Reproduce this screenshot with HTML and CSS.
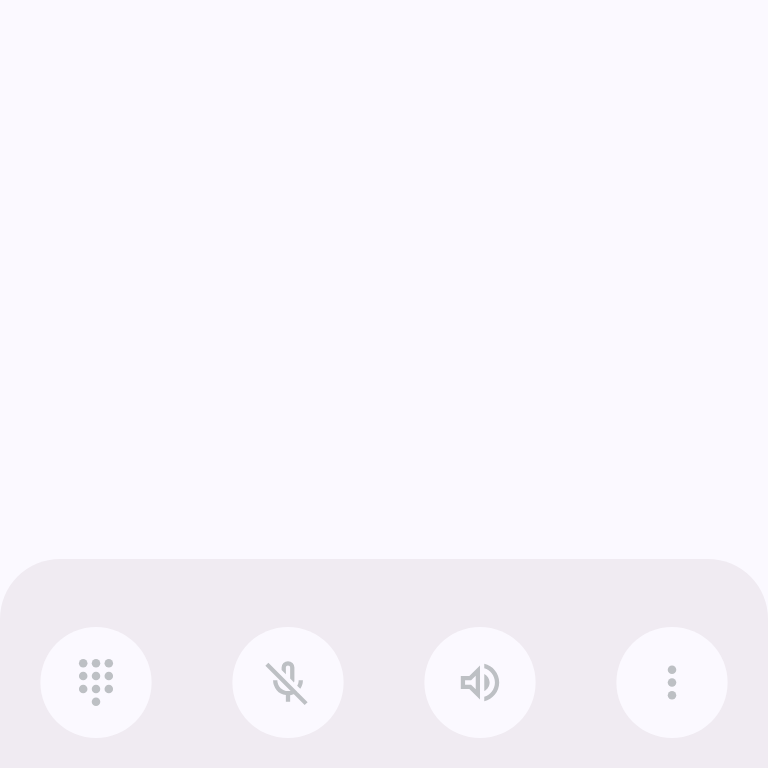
FILE: index.html
```html
<!DOCTYPE html>
<html lang="en">
<head>
<meta charset="utf-8">
<title>Call</title>
<link rel="stylesheet" href="styles.css">
</head>
<body>
<main class="screen">
  <div class="controls">
    <button class="control">
      <svg class="icon" viewBox="0 0 112 112">
        <circle class="disc" cx="56" cy="55.5" r="55.6"/>
        <g transform="translate(30.4 29.9) scale(2.1333)">
          <circle cx="6" cy="3" r="2"/><circle cx="12" cy="3" r="2"/><circle cx="18" cy="3" r="2"/>
          <circle cx="6" cy="9" r="2"/><circle cx="12" cy="9" r="2"/><circle cx="18" cy="9" r="2"/>
          <circle cx="6" cy="15" r="2"/><circle cx="12" cy="15" r="2"/><circle cx="18" cy="15" r="2"/>
          <circle cx="12" cy="21" r="2"/>
        </g>
      </svg>
    </button>
    <button class="control">
      <svg class="icon" viewBox="0 0 112 112">
        <circle class="disc" cx="56" cy="55.5" r="55.6"/>
        <path transform="translate(30.4 29.9) scale(2.1333)" d="M17.75 14.95 16.3 13.5q.35-.575.525-1.2Q17 11.675 17 11h2q0 1.1-.325 2.087-.325.988-.925 1.863ZM14.8 11.95 13 10.15V5q0-.425-.287-.713Q12.425 4 12 4t-.712.287Q11 4.575 11 5v3.15l-2-2V5q0-1.25.875-2.125T12 2q1.25 0 2.125.875T15 5v6q0 .275-.062.5-.063.225-.138.45ZM11 21v-3.1q-2.6-.35-4.3-2.312Q5 13.625 5 11h2q0 2.075 1.463 3.537Q9.925 16 12 16q.85 0 1.613-.262.762-.263 1.387-.738l1.425 1.425q-.725.575-1.588.963-.862.387-1.837.537V21ZM19.8 22.6 1.4 4.2l1.4-1.4 18.4 18.4Z"/>
      </svg>
    </button>
    <button class="control">
      <svg class="icon" viewBox="0 0 112 112">
        <circle class="disc" cx="56" cy="55.5" r="55.6"/>
        <path transform="translate(30.4 29.9) scale(2.1333)" d="M3 9v6h4l5 5V4L7 9H3Zm7-.17v6.34L7.83 13H5v-2h2.83L10 8.83ZM16.5 12c0-1.77-1.02-3.29-2.5-4.03v8.05c1.48-.73 2.5-2.25 2.5-4.02ZM14 3.23v2.06c2.89.86 5 3.54 5 6.71s-2.11 5.85-5 6.71v2.06c4.01-.91 7-4.49 7-8.77s-2.99-7.86-7-8.77Z"/>
      </svg>
    </button>
    <button class="control">
      <svg class="icon" viewBox="0 0 112 112">
        <circle class="disc" cx="56" cy="55.5" r="55.6"/>
        <g transform="translate(30.4 29.9) scale(2.1333)">
          <circle cx="12" cy="6" r="2"/><circle cx="12" cy="12" r="2"/><circle cx="12" cy="18" r="2"/>
        </g>
      </svg>
    </button>
  </div>
</main>
</body>
</html>
```
FILE: styles.css
```css
body {
  margin: 0;
}

.screen {
  display: flex;
  flex-direction: column;
  justify-content: flex-end;
  height: 100vh;
  overflow: hidden;
  background: #fbf9ff;
}

.controls {
  display: grid;
  grid-template-columns: repeat(4, 1fr);
  justify-items: center;
  align-items: start;
  box-sizing: border-box;
  height: 209px;
  padding-top: 68px;
  border-radius: 60px 60px 0 0;
  background: #f0ebf2;
}

.control {
  width: 112px;
  height: 112px;
  padding: 0;
  border: 0;
  background: none;
}

.icon {
  display: block;
  width: 112px;
  height: 112px;
  overflow: visible;
  fill: #bdc0c4;
}

.disc {
  fill: #fbf9ff;
}
```
